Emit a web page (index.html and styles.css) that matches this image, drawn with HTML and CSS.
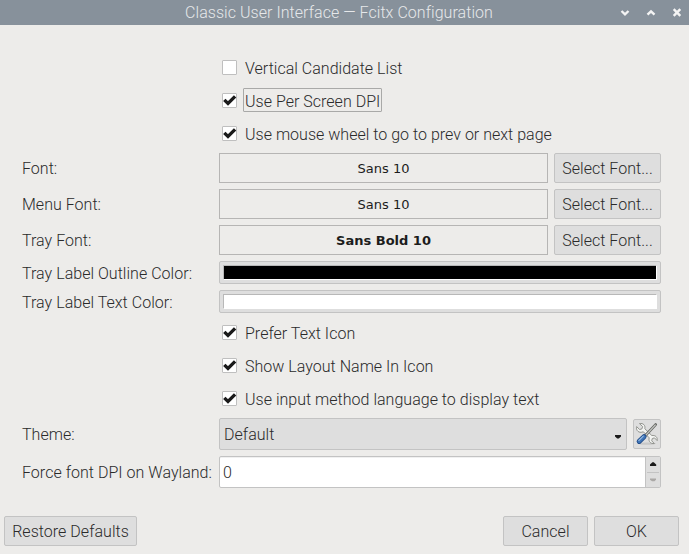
FILE: index.html
```html
<!DOCTYPE html>
<html lang="en">
<head>
<meta charset="utf-8">
<title>Classic User Interface — Fcitx Configuration</title>
<link rel="stylesheet" href="styles.css">
</head>
<body>
<svg class="defs" width="0" height="0" aria-hidden="true">
  <symbol id="check" viewBox="0 0 15 15"><path d="M2.3 6.8 6 10.5 13.1 3.4" fill="none" stroke="#1a1a1a" stroke-width="3.3"/></symbol>
</svg>
<header class="titlebar">
  <h1 class="title">Classic User Interface — Fcitx Configuration</h1>
  <div class="window-controls">
    <svg width="10" height="10" viewBox="0 0 10 10"><path d="M1.5 3 5 6.3 8.5 3"/></svg>
    <svg width="10" height="10" viewBox="0 0 10 10"><path d="M1.5 6.7 5 3.4 8.5 6.7"/></svg>
    <svg width="10" height="10" viewBox="0 0 10 10"><path d="M1.7 1.2 8.3 7.8M8.3 1.2 1.7 7.8"/></svg>
  </div>
</header>
<main class="form">
  <div class="option"><span class="box"></span><span class="text">Vertical Candidate List</span></div>
  <div class="option"><span class="box"><svg><use href="#check"/></svg></span><span class="text focused">Use Per Screen DPI</span></div>
  <div class="option"><span class="box"><svg><use href="#check"/></svg></span><span class="text">Use mouse wheel to go to prev or next page</span></div>

  <label class="label">Font:</label>
  <div class="field"><div class="preview">Sans 10</div><button class="button select">Select Font...</button></div>
  <label class="label">Menu Font:</label>
  <div class="field"><div class="preview">Sans 10</div><button class="button select">Select Font...</button></div>
  <label class="label">Tray Font:</label>
  <div class="field"><div class="preview bold">Sans Bold 10</div><button class="button select">Select Font...</button></div>

  <label class="label low">Tray Label Outline Color:</label>
  <div class="color"><div class="swatch black"></div></div>
  <label class="label low">Tray Label Text Color:</label>
  <div class="color"><div class="swatch white"></div></div>

  <div class="option"><span class="box"><svg><use href="#check"/></svg></span><span class="text">Prefer Text Icon</span></div>
  <div class="option"><span class="box"><svg><use href="#check"/></svg></span><span class="text">Show Layout Name In Icon</span></div>
  <div class="option"><span class="box"><svg><use href="#check"/></svg></span><span class="text">Use input method language to display text</span></div>

  <label class="label">Theme:</label>
  <div class="field theme">
    <div class="combo"><span>Default</span><svg width="8" height="4" viewBox="0 0 8 4"><path d="M1 0H7V1.4L4.8 3.6H3.2L1 1.4Z" fill="#1a1a1a"/></svg></div>
    <button class="button tool" aria-label="Configure theme">
      <svg width="24" height="24" viewBox="0 0 24 24">
        <ellipse cx="12" cy="21.6" rx="9" ry="1.2" fill="#c8c8c8"/>
        <path d="M4.5 1.6 7.6 4.6 6.9 6.9 4.6 7.5 1.6 4.6C.9 7.6 2.7 10.5 6.2 10.3L8.4 9.8 14.2 15.8C13.2 19.5 15.6 22 19.3 21.5L16.7 18.8 17.3 16.5 19.5 15.9 22.2 18.6C22.7 15.3 20.5 13 16.8 13.5L9.8 6.7C10.6 3.3 8.2.9 4.5 1.6Z" fill="#f3f4f2" stroke="#888a85" stroke-width=".9"/>
        <path d="M10.2 13.8 20.6 2.6" stroke="#666864" stroke-width="2.8" stroke-linecap="round"/>
        <path d="M10.2 13.8 20.6 2.6" stroke="#c9cbc7" stroke-width="1.2"/>
        <path d="M4.2 19.4 9 14.7" stroke="#204a87" stroke-width="5" stroke-linecap="round"/>
        <path d="M4.2 19.4 9 14.7" stroke="#3f75b8" stroke-width="3.4" stroke-linecap="round"/>
        <path d="M3.8 18.5 8.3 14.2" stroke="#94b9e0" stroke-width="1.1" stroke-linecap="round"/>
      </svg>
    </button>
  </div>
  <label class="label">Force font DPI on Wayland:</label>
  <div class="spin">
    <span class="value">0</span>
    <div class="steps">
      <div class="step"><svg width="8" height="4" viewBox="0 0 8 4"><path d="M1 4H7.2V2.5L4.8.3H3.4L1 2.5Z" fill="#1a1a1a"/></svg></div>
      <div class="step"><svg width="8" height="4" viewBox="0 0 8 4"><path d="M1 .5H7V1.8L5.5 3.3H3L1 1.8Z" fill="#aaa8a6"/></svg></div>
    </div>
  </div>
</main>
<footer class="actions">
  <button class="button restore">Restore Defaults</button>
  <button class="button cancel">Cancel</button>
  <button class="button ok">OK</button>
</footer>
</body>
</html>
```
FILE: styles.css
```css
* { box-sizing: border-box; }
body {
  margin: 0;
  width: 689px;
  height: 554px;
  overflow: hidden;
  background: #edecea;
  color: #2a2a2a;
  font: 300 16px/19px Roboto, "Liberation Sans", sans-serif;
  letter-spacing: 0.03px;
  white-space: nowrap;
}
.defs { display: block; }
svg { display: block; flex: none; }
.titlebar {
  display: grid;
  grid-template-columns: 678px;
  height: 25px;
  background: #87919b;
  color: #e6e8ea;
}
.title {
  grid-area: 1 / 1;
  margin: 0;
  font-size: 16px;
  font-weight: 300;
  line-height: 25px;
  letter-spacing: 0.05px;
  text-align: center;
}
.window-controls {
  grid-area: 1 / 1;
  justify-self: end;
  display: flex;
  align-items: center;
  gap: 16px;
  margin-right: -4px;
  fill: none;
  stroke: #f4f4f4;
  stroke-width: 2.4;
}
.form {
  display: grid;
  grid-template-columns: 191px 442px;
  grid-template-rows: repeat(3, 27px) repeat(3, 30px) repeat(2, 23px) repeat(3, 27px) repeat(2, 32px);
  column-gap: 6px;
  row-gap: 6px;
  padding: 29px 0 0 22px;
}
.label { align-self: center; }
.low { padding-top: 2px; }
.option {
  grid-column: 2;
  display: flex;
  align-items: flex-start;
  padding-left: 3px;
}
.box {
  width: 15px;
  height: 15px;
  margin-top: 6px;
  border: 1px solid #bfbfbf;
  border-radius: 1px;
  background: #fff;
}
.box svg { width: 15px; height: 15px; margin: -1px; }
.text {
  margin: 1px 0 0 6px;
  padding: 3px 1px 0;
  height: 24px;
  line-height: 20px;
  letter-spacing: 0.02px;
  border: 1px solid transparent;
}
.focused { border-color: #a9a9a8; border-radius: 1px; }
.field { display: flex; gap: 6px; }
.preview {
  flex: 1;
  padding-top: 1px;
  border: 1px solid #b6b5b4;
  color: #1c1c1c;
  font: 13px/28px "DejaVu Sans", sans-serif;
  letter-spacing: 0;
  text-align: center;
}
.bold { font-weight: bold; }
.button {
  padding: 0;
  border: 1px solid #c3c3c3;
  border-radius: 2px;
  background: #dedede;
  color: inherit;
  font: inherit;
  letter-spacing: inherit;
  text-align: center;
}
.select { width: 107px; }
.color {
  padding: 3px;
  border: 1px solid #c3c3c3;
  border-radius: 2px;
  background: #dedede;
}
.swatch {
  height: 15px;
  border: 1px solid;
  border-color: #b8b8b8 #fff #fff #b8b8b8;
}
.black { background: #000; }
.white { background: #fff; }
.theme { align-items: flex-start; }
.combo {
  flex: 1;
  height: 32px;
  display: flex;
  align-items: center;
  justify-content: space-between;
  padding: 0 4px;
  border: 1px solid #c3c3c3;
  border-radius: 2px;
  background: #dedede;
}
.combo svg { margin-top: 5px; }
.tool {
  width: 28px;
  height: 30px;
  margin-top: 1px;
  display: grid;
  place-items: center;
}
.spin {
  display: flex;
  border: 1px solid #c3c3c3;
  border-radius: 2px;
  background: #fff;
  box-shadow: inset 0 1px #f0f0f0;
}
.value { flex: 1; padding: 1px 0 0 3px; line-height: 30px; height: 30px; }
.steps {
  width: 15px;
  border-left: 1px solid #c3c3c3;
  background: #dedede;
}
.step { height: 15px; display: grid; place-items: center; padding-bottom: 1px; }
.step + .step { margin: 0 1px; border-top: 1px solid #c3c3c3; }
.actions {
  display: flex;
  gap: 6px;
  height: 30px;
  margin: 28px 10px 0 4px;
}
.restore { width: 133px; margin-right: auto; }
.cancel, .ok { width: 85px; }
```
